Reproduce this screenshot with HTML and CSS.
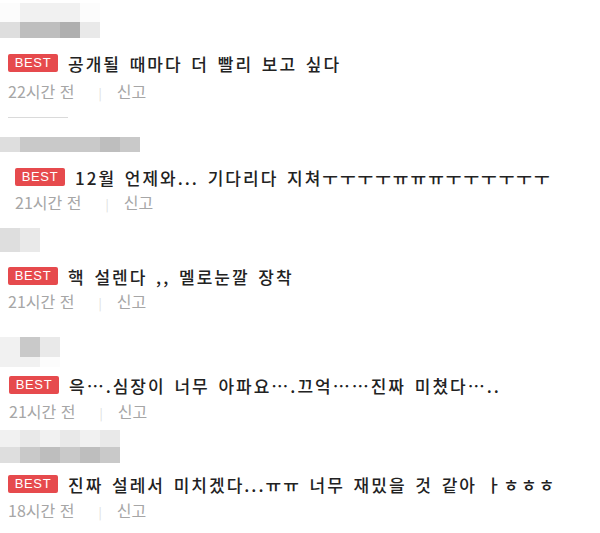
FILE: index.html
```html
<!DOCTYPE html>
<html lang="ko">
<head>
  <meta charset="UTF-8">
  <title>베스트 댓글</title>
  <link rel="stylesheet" href="styles.css">
</head>
<body>
  <div class="feed">

    <!-- 댓글 1 -->
    <div class="cmt c1">
      <div class="nick">
        <i class="s0"></i><i class="s1"></i><i class="s1"></i><i class="s1"></i><i class="s0"></i>
        <i class="s3"></i><i class="s5"></i><i class="s5"></i><i class="s6"></i><i class="s2"></i>
      </div>
      <p class="title"><span class="best">BEST</span>공개될 때마다 더 빨리 보고 싶다</p>
      <p class="meta">22시간 전<span class="bar">|</span>신고</p>
    </div>
    <div class="cut"></div>

    <!-- 댓글 2 -->
    <div class="cmt c2">
      <div class="nick">
        <i class="s3"></i><i class="s4"></i><i class="s4"></i><i class="s4"></i><i class="s4"></i><i class="s5"></i><i class="s4"></i>
      </div>
      <p class="title"><span class="best">BEST</span>12월 언제와... 기다리다 지쳐ㅜㅜㅜㅜㅠㅠㅠㅜㅜㅜㅜㅜㅜ</p>
      <p class="meta">21시간 전<span class="bar">|</span>신고</p>
    </div>

    <!-- 댓글 3 -->
    <div class="cmt c3">
      <div class="nick">
        <i class="s3"></i><i class="s2"></i>
      </div>
      <p class="title"><span class="best">BEST</span>핵 설렌다 ,, 멜로눈깔 장착</p>
      <p class="meta">21시간 전<span class="bar">|</span>신고</p>
    </div>

    <!-- 댓글 4 -->
    <div class="cmt c4">
      <div class="nick">
        <i class="s1"></i><i class="s4"></i><i class="s2"></i>
        <i class="s1"></i><i class="s1"></i><i class="s0"></i>
      </div>
      <p class="title"><span class="best">BEST</span>윽⋯.심장이 너무 아파요⋯.끄억⋯⋯진짜 미쳤다⋯..</p>
      <p class="meta">21시간 전<span class="bar">|</span>신고</p>
    </div>

    <!-- 댓글 5 -->
    <div class="cmt c5">
      <div class="nick">
        <i class="s1"></i><i class="s2"></i><i class="s1"></i><i class="s2"></i><i class="s1"></i><i class="s2"></i>
        <i class="s3"></i><i class="s4"></i><i class="s5"></i><i class="s4"></i><i class="s5"></i><i class="s4"></i>
      </div>
      <p class="title"><span class="best">BEST</span>진짜 설레서 미치겠다...ㅠㅠ 너무 재밌을 것 같아 ㅏㅎㅎㅎ</p>
      <p class="meta">18시간 전<span class="bar">|</span>신고</p>
    </div>

  </div>
</body>
</html>
```

FILE: styles.css
```css
:root {
  --text: #222;
  --meta: #a6a6a6;
  --badge: #e64a4d;
}

body {
  margin: 0;
  background: #fff;
  font-family: "Noto Sans CJK KR", "Noto Sans", sans-serif;
  color: var(--text);
}

.feed {
  width: 600px;
  height: 533px;
  overflow: hidden;
}

.cmt {
  padding-left: 8px;
}

/* 모자이크 처리된 닉네임 */
.nick {
  display: grid;
  grid-template-columns: repeat(var(--cols), 20px);
  grid-auto-rows: var(--row, 16px);
  margin-left: -8px;
}

.nick i { display: block; }
.s0 { background: #fcfcfc; }
.s1 { background: #f1f1f1; }
.s2 { background: #e9e9e9; }
.s3 { background: #dedede; }
.s4 { background: #c9c9c9; }
.s5 { background: #bebebe; }
.s6 { background: #afafaf; }

.title {
  display: flex;
  align-items: center;
  gap: 10px;
  margin: 0;
  height: 26px;
  font-size: 17px;
  font-weight: 500;
  letter-spacing: 2px;
  word-spacing: 2px;
  white-space: nowrap;
}

.best {
  flex: none;
  width: 50px;
  height: 18px;
  line-height: 18px;
  border-radius: 2px;
  background: var(--badge);
  color: #fff;
  font-family: "Liberation Sans", Arial, sans-serif;
  font-size: 13px;
  font-weight: normal;
  letter-spacing: 0.6px;
  word-spacing: 0;
  text-align: center;
}

.meta {
  margin: 0;
  height: 22px;
  line-height: 22px;
  font-size: 16px;
  color: var(--meta);
}

.bar {
  color: #dcdcdc;
  font-size: 12px;
  padding: 0 15px 0 24px;
}

.cut {
  width: 60px;
  height: 1px;
  margin: 15px 0 0 8px;
  background: #dadada;
}

/* 캡처마다 조금씩 다른 위치 */
.c1 .nick { --cols: 5; grid-template-rows: 19px 16px; margin-top: 3px; }
.c1 .title { margin-top: 12px; }
.c1 .meta { margin-top: 4px; }

.c2 { padding-left: 15px; }
.c2 .nick { --cols: 7; --row: 15px; margin-top: 19px; margin-left: -15px; }
.c2 .title { margin-top: 12px; }
.c2 .meta { margin-top: 1px; }

.c3 .nick { --cols: 2; --row: 24px; margin-top: 15px; }
.c3 .title { margin-top: 11px; }
.c3 .meta { margin-top: 1px; }

.c4 { padding-left: 9px; }
.c4 .nick { --cols: 3; grid-template-rows: 20px 10px; margin-top: 25px; margin-left: -9px; }
.c4 .title { margin-top: 5px; }
.c4 .meta { margin-top: 2px; }

.c5 .nick { --cols: 6; grid-template-rows: 17px 16px; margin-top: 8px; }
.c5 .title { margin-top: 8px; }
.c5 .meta { margin-top: 2px; }
```
